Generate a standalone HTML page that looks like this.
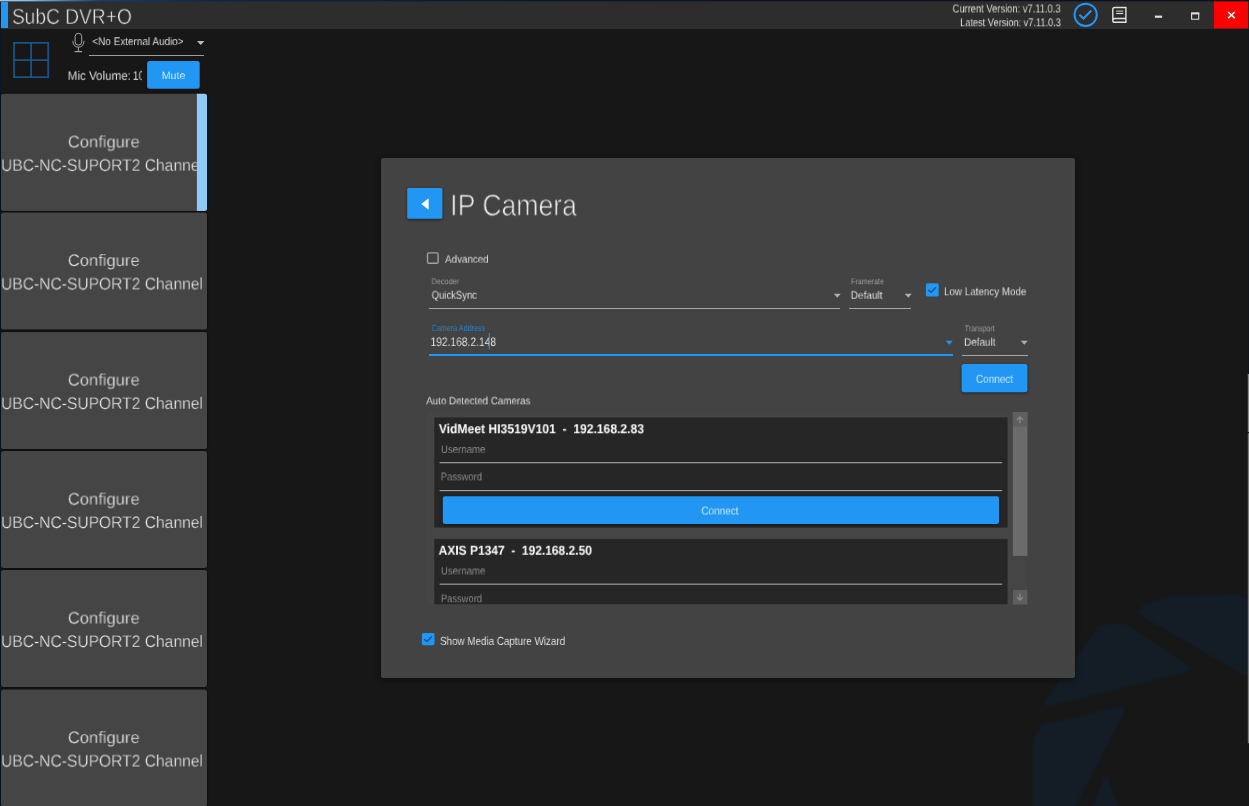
<!DOCTYPE html>
<html><head><meta charset="utf-8"><title>SubC DVR+O</title>
<style>
html,body{margin:0;padding:0}
html,body{width:1249px;height:806px;overflow:hidden;background:#171717}
#r{width:1249px;height:806px;overflow:hidden;position:relative;font-family:"Liberation Sans",sans-serif}
#r>div,#r>span,#r>svg{position:absolute;box-sizing:content-box}
.t{white-space:pre;transform-origin:0 0;display:block;will-change:transform;text-rendering:geometricPrecision}
</style></head><body><div id="r">
<div style="left:0px;top:0px;width:1249px;height:29px;background:#2d2d2d;"></div>
<div style="left:0px;top:0px;width:1249px;height:1px;background:linear-gradient(90deg,#9ccbf0 0,#86b9e4 2.4%,#143c6e 8%,#0b2242 20%,#0a1628 50%,#0b0f1a 100%);"></div>
<div style="left:0px;top:1px;width:1249px;height:1px;background:linear-gradient(90deg,#9ccbf0 0,#86b9e4 2.4%,#143c6e 8%,#0b2242 20%,#0a1628 50%,#0b0f1a 100%);opacity:.35;"></div>
<div style="left:0px;top:2px;width:8px;height:26px;background:#2196f3;"></div>
<span class="t" style="left:11px;top:6px;font-size:21.51px;line-height:21.51px;color:#f2f2f2;transform:translate(0.96px,0.80px) scaleX(0.8911);-webkit-text-stroke:0.54px #2d2d2d;">SubC DVR+O</span>
<span class="t" style="left:952px;top:3px;font-size:11.63px;line-height:11.63px;color:#f2f2f2;transform:translate(0.62px,0.50px) scaleX(0.8044);-webkit-text-stroke:0.12px #2d2d2d;">Current Version: v7.11.0.3</span>
<span class="t" style="left:960px;top:18px;font-size:11.19px;line-height:11.19px;color:#f2f2f2;transform:translate(0.18px,0.20px) scaleX(0.8232);-webkit-text-stroke:0.11px #2d2d2d;">Latest Version: v7.11.0.3</span>
<svg style="left:1070px;top:0px" width="32" height="30" viewBox="1070 0 32 30"><circle cx="1085.65" cy="14.8" r="11.15" fill="none" stroke="#2196f3" stroke-width="2"/><path d="M1079.4 14.7 L1083.5 18.5 L1091.3 10.5" fill="none" stroke="#2196f3" stroke-width="2"/></svg>
<svg style="left:1108px;top:2px" width="24" height="26" viewBox="1108 2 24 26"><path d="M1112.8 20.4 V9.4 Q1112.8 7.5 1114.7 7.5 H1125.9 V22.3 H1114.8 Q1112.8 22.3 1112.8 20.4 Q1112.8 18.5 1114.8 18.5 H1125.9" fill="none" stroke="#e2e2e2" stroke-width="1.4"/><path d="M1116.2 11.2 H1123.2" stroke="#a8a8a8" stroke-width="1.4"/><path d="M1116.2 13.5 H1123.2" stroke="#e2e2e2" stroke-width="1.1"/></svg>
<svg style="left:1153px;top:14px" width="11" height="5" viewBox="1153 14 11 5"><rect x="1154.9" y="15.6" width="7.2" height="2.2" rx="0" fill="#e0e0e0"/></svg>
<svg style="left:1189px;top:10px" width="12" height="12" viewBox="0 0 12 12"><path d="M2.6 3.4 H9.7 V9.3 H2.6 Z" fill="none" stroke="#e0e0e0" stroke-width="1.1"/><path d="M2.05 3.4 H10.25" stroke="#e0e0e0" stroke-width="2"/></svg>
<svg style="left:1213px;top:0px" width="36" height="30" viewBox="1213 0 36 30"><rect x="1214" y="1.5" width="34" height="26.9" rx="0" fill="#fe0000"/></svg>
<svg style="left:1224px;top:8px" width="16" height="14" viewBox="1224 8 16 14"><path d="M1228.2 12 L1234.7 18.2 M1234.7 12 L1228.2 18.2" stroke="#fff" stroke-width="1.6"/></svg>
<div style="left:0px;top:2px;width:1px;height:804px;background:#0b1727;"></div>
<svg style="left:11px;top:40px" width="40" height="40" viewBox="11 40 40 40"><path d="M14 42.9 H48.2 V77.2 H14 Z M31.1 42.9 V77.2 M14 60 H48.2" fill="none" stroke="#1a5487" stroke-width="1.75"/></svg>
<svg style="left:68px;top:31px" width="20" height="24" viewBox="68 31 20 24"><rect x="75.1" y="33.3" width="6.6" height="11.8" rx="3.3" fill="none" stroke="#a6a6a6" stroke-width="1"/><path d="M72.9 40.8 V41.7 A5.5 5.5 0 0 0 83.9 41.7 V40.8 M78.4 47.2 V51.4" fill="none" stroke="#a6a6a6" stroke-width="1"/><path d="M74.6 51.6 H82.1" stroke="#a6a6a6" stroke-width="1.2"/></svg>
<span class="t" style="left:92px;top:37px;font-size:11.19px;line-height:11.19px;color:#f2f2f2;transform:translate(0.38px,0.10px) scaleX(0.8884);-webkit-text-stroke:0.11px #171717;">&lt;No External Audio&gt;</span>
<svg style="left:196px;top:40px" width="10" height="6" viewBox="0 0 10 6"><path d="M1 1 H8.4 L4.7 5 Z" fill="#bdbdbd"/></svg>
<div style="left:89px;top:55px;width:115px;height:1px;background:#9c9c9c;"></div>
<span class="t" style="left:67px;top:69px;font-size:12.5px;line-height:12.5px;color:#f2f2f2;transform:translate(0.67px,0.80px) scaleX(0.9288);-webkit-text-stroke:0.12px #171717;">Mic Volume:</span>
<span class="t" style="left:132px;top:69px;font-size:12.5px;line-height:12.5px;color:#f2f2f2;transform:translate(0.76px,0.80px) scaleX(0.8401);-webkit-text-stroke:0.12px #171717;">10</span>
<div style="left:142px;top:64px;width:5px;height:20px;background:#171717;"></div>
<svg style="left:143px;top:56px;filter:drop-shadow(0 1.2px 1.6px rgba(0,0,0,.5))" width="62" height="39" viewBox="143 56 62 39"><rect x="147.1" y="60.9" width="52.6" height="27.8" rx="2.5" fill="#2196f3"/></svg>
<span class="t" style="left:161px;top:70px;font-size:10.61px;line-height:10.61px;color:#eaf4fd;transform:translate(0.71px,0.82px) scaleX(1.0038);-webkit-text-stroke:0.11px #2196f3;">Mute</span>
<svg style="left:-3px;top:89px;filter:drop-shadow(0 .5px 1.2px rgba(0,0,0,.8))" width="215" height="128" viewBox="-3 89 215 128"><rect x="1" y="93.8" width="206" height="117.1" rx="2.5" fill="#454545"/></svg>
<span class="t" style="left:67px;top:134px;font-size:16.72px;line-height:16.72px;color:#f0f0f0;transform:translate(0.82px,0.40px) scaleX(0.9916);-webkit-text-stroke:0.33px #454545;">Configure</span>
<span class="t" style="left:1px;top:157px;font-size:16.72px;line-height:16.72px;color:#f0f0f0;transform:translate(0.02px,0.80px) scaleX(0.9348);-webkit-text-stroke:0.33px #454545;">UBC-NC-SUPORT2 Channel</span>
<svg style="left:195px;top:92px" width="14" height="121" viewBox="195 92 14 121"><path d="M196.9 93.8 H204.5 Q207 93.8 207 96.3 V208.39999999999998 Q207 210.89999999999998 204.5 210.89999999999998 H196.9 Z" fill="#90caf9"/></svg>
<svg style="left:-3px;top:208px;filter:drop-shadow(0 .5px 1.2px rgba(0,0,0,.8))" width="215" height="128" viewBox="-3 208 215 128"><rect x="1" y="212.4" width="206" height="117.1" rx="2.5" fill="#454545"/></svg>
<span class="t" style="left:67px;top:253px;font-size:16.72px;line-height:16.72px;color:#f0f0f0;transform:translate(0.82px,0.00px) scaleX(0.9916);-webkit-text-stroke:0.33px #454545;">Configure</span>
<span class="t" style="left:1px;top:276px;font-size:16.72px;line-height:16.72px;color:#f0f0f0;transform:translate(0.02px,0.40px) scaleX(0.9348);-webkit-text-stroke:0.33px #454545;">UBC-NC-SUPORT2 Channel</span>
<svg style="left:-3px;top:327px;filter:drop-shadow(0 .5px 1.2px rgba(0,0,0,.8))" width="215" height="128" viewBox="-3 327 215 128"><rect x="1" y="331.9" width="206" height="117.1" rx="2.5" fill="#454545"/></svg>
<span class="t" style="left:67px;top:372px;font-size:16.72px;line-height:16.72px;color:#f0f0f0;transform:translate(0.82px,0.50px) scaleX(0.9916);-webkit-text-stroke:0.33px #454545;">Configure</span>
<span class="t" style="left:1px;top:395px;font-size:16.72px;line-height:16.72px;color:#f0f0f0;transform:translate(0.02px,0.90px) scaleX(0.9348);-webkit-text-stroke:0.33px #454545;">UBC-NC-SUPORT2 Channel</span>
<svg style="left:-3px;top:447px;filter:drop-shadow(0 .5px 1.2px rgba(0,0,0,.8))" width="215" height="128" viewBox="-3 447 215 128"><rect x="1" y="451" width="206" height="117.1" rx="2.5" fill="#454545"/></svg>
<span class="t" style="left:67px;top:491px;font-size:16.72px;line-height:16.72px;color:#f0f0f0;transform:translate(0.82px,0.60px) scaleX(0.9916);-webkit-text-stroke:0.33px #454545;">Configure</span>
<span class="t" style="left:1px;top:515px;font-size:16.72px;line-height:16.72px;color:#f0f0f0;transform:translate(0.02px,0.00px) scaleX(0.9348);-webkit-text-stroke:0.33px #454545;">UBC-NC-SUPORT2 Channel</span>
<svg style="left:-3px;top:566px;filter:drop-shadow(0 .5px 1.2px rgba(0,0,0,.8))" width="215" height="128" viewBox="-3 566 215 128"><rect x="1" y="570" width="206" height="117.1" rx="2.5" fill="#454545"/></svg>
<span class="t" style="left:67px;top:610px;font-size:16.72px;line-height:16.72px;color:#f0f0f0;transform:translate(0.82px,0.60px) scaleX(0.9916);-webkit-text-stroke:0.33px #454545;">Configure</span>
<span class="t" style="left:1px;top:634px;font-size:16.72px;line-height:16.72px;color:#f0f0f0;transform:translate(0.02px,0.00px) scaleX(0.9348);-webkit-text-stroke:0.33px #454545;">UBC-NC-SUPORT2 Channel</span>
<svg style="left:-3px;top:685px;filter:drop-shadow(0 .5px 1.2px rgba(0,0,0,.8))" width="215" height="128" viewBox="-3 685 215 128"><rect x="1" y="689.5" width="206" height="117.1" rx="2.5" fill="#454545"/></svg>
<span class="t" style="left:67px;top:730px;font-size:16.72px;line-height:16.72px;color:#f0f0f0;transform:translate(0.82px,0.10px) scaleX(0.9916);-webkit-text-stroke:0.33px #454545;">Configure</span>
<span class="t" style="left:1px;top:753px;font-size:16.72px;line-height:16.72px;color:#f0f0f0;transform:translate(0.02px,0.50px) scaleX(0.9348);-webkit-text-stroke:0.33px #454545;">UBC-NC-SUPORT2 Channel</span>
<svg style="left:1020px;top:580px" width="229" height="226" viewBox="1020 580 229 226"><g fill="#141c25" stroke="#141c25" stroke-width="5" stroke-linejoin="round" style="filter:blur(0.8px)"><path d="M1139.5 612.5 L1145 606.5 L1173 598 L1236 596.5 L1245 601 L1247 606 L1252 606 L1252 676.5 L1247 674 Z"/><path d="M1100 627.5 L1103.5 626 L1124 625.5 L1188 667 L1186 670 L1048 704.5 L1046.5 702.5 Z"/><path d="M1043 727 L1121.5 708.5 L1123 710 L1071 810 L1035.5 810 L1035.5 738 Z"/><path d="M1106.2 780 L1092.5 810 L1117.5 810 Z"/></g></svg>
<svg style="left:1246px;top:373px" width="5" height="60" viewBox="1246 373 5 60"><rect x="1247.8" y="374" width="1.3" height="58" rx="0" fill="#8a8a8a"/></svg>
<svg style="left:1246px;top:432px" width="5" height="313" viewBox="1246 432 5 313"><rect x="1247.8" y="433.2" width="1.3" height="310" rx="0" fill="#7c7c7c"/></svg>
<div style="left:1248px;top:30px;width:1px;height:344px;background:#10161f;"></div>
<div style="left:381px;top:158px;width:694px;height:520px;background:#434343;border-radius:2px;box-shadow:0 2px 6px rgba(0,0,0,.45);"></div>
<svg style="left:403px;top:184px;filter:drop-shadow(0 1.2px 1.6px rgba(0,0,0,.5))" width="45" height="41" viewBox="403 184 45 41"><rect x="407.2" y="188" width="35.2" height="30.8" rx="1.5" fill="#2196f3"/></svg>
<svg style="left:419px;top:196px" width="12" height="16" viewBox="0 0 12 16"><path d="M9.6 2.3 V13.7 L2.3 8 Z" fill="#fff"/></svg>
<span class="t" style="left:450px;top:191px;font-size:30.23px;line-height:30.23px;color:#f6f6f6;transform:translate(0.16px,0.50px) scaleX(0.8808);-webkit-text-stroke:0.79px #434343;">IP Camera</span>
<svg style="left:425px;top:250px" width="16" height="16" viewBox="0 0 16 16"><rect x="2.5" y="2.9" width="10.6" height="10.4" rx="1.3" fill="none" stroke="#a2a2a2" stroke-width="1.35"/></svg>
<span class="t" style="left:445px;top:254px;font-size:10.76px;line-height:10.76px;color:#f2f2f2;transform:translate(0.00px,0.70px) scaleX(0.9149);-webkit-text-stroke:0.11px #434343;">Advanced</span>
<span class="t" style="left:431px;top:277px;font-size:8.43px;line-height:8.43px;color:#a8a8a8;transform:translate(0.54px,0.21px) scaleX(0.8660);-webkit-text-stroke:0.08px #434343;">Decoder</span>
<span class="t" style="left:431px;top:290px;font-size:11.19px;line-height:11.19px;color:#f2f2f2;transform:translate(0.67px,0.70px) scaleX(0.8471);-webkit-text-stroke:0.11px #434343;">QuickSync</span>
<div style="left:429px;top:308px;width:411px;height:1.1px;background:#a6a6a6;"></div>
<svg style="left:833px;top:293.3px" width="9" height="6" viewBox="0 0 9 6"><path d="M0.8 0.8 H7.8 L4.3 4.8 Z" fill="#adadad"/></svg>
<span class="t" style="left:851px;top:277px;font-size:8.43px;line-height:8.43px;color:#a8a8a8;transform:translate(0.05px,0.21px) scaleX(0.8468);-webkit-text-stroke:0.08px #434343;">Framerate</span>
<span class="t" style="left:850px;top:290px;font-size:10.9px;line-height:10.9px;color:#f2f2f2;transform:translate(0.76px,0.80px) scaleX(0.9199);-webkit-text-stroke:0.11px #434343;">Default</span>
<svg style="left:903.6px;top:293.3px" width="9" height="6" viewBox="0 0 9 6"><path d="M0.8 0.8 H7.8 L4.3 4.8 Z" fill="#adadad"/></svg>
<div style="left:849px;top:308px;width:62px;height:1.1px;background:#a6a6a6;"></div>
<svg style="left:924px;top:282px" width="16" height="16" viewBox="924 282 16 16"><rect x="925.9" y="283.3" width="12.8" height="13.1" rx="1.6" fill="#2196f3"/><path d="M928.20 290.11 L931.02 292.47 L936.01 287.10" fill="none" stroke="#1d4c80" stroke-width="1.3"/></svg>
<span class="t" style="left:944px;top:287px;font-size:11.34px;line-height:11.34px;color:#f2f2f2;transform:translate(0.03px,0.30px) scaleX(0.8658);-webkit-text-stroke:0.11px #434343;">Low Latency Mode</span>
<span class="t" style="left:431px;top:323px;font-size:8.87px;line-height:8.87px;color:#2a8ade;transform:translate(0.57px,0.90px) scaleX(0.8112);-webkit-text-stroke:0.09px #434343;">Camera Address</span>
<span class="t" style="left:430px;top:335px;font-size:12.21px;line-height:12.21px;color:#f2f2f2;transform:translate(0.56px,0.90px) scaleX(0.8389);-webkit-text-stroke:0.12px #434343;">192.168.2.148</span>
<svg style="left:487px;top:332px" width="4" height="19" viewBox="487 332 4 19"><rect x="488.8" y="333" width="1.2" height="16.4" rx="0" fill="#3585cc"/></svg>
<div style="left:429px;top:353.5px;width:524px;height:2.3px;background:#2196f3;"></div>
<svg style="left:945.3px;top:339.7px" width="9" height="6" viewBox="0 0 9 6"><path d="M0.8 0.8 H7.8 L4.3 4.8 Z" fill="#2196f3"/></svg>
<span class="t" style="left:964px;top:324px;font-size:8.72px;line-height:8.72px;color:#a8a8a8;transform:translate(0.75px,0.30px) scaleX(0.8111);-webkit-text-stroke:0.09px #434343;">Transport</span>
<span class="t" style="left:964px;top:337px;font-size:11.05px;line-height:11.05px;color:#f2f2f2;transform:translate(0.16px,0.70px) scaleX(0.8933);-webkit-text-stroke:0.11px #434343;">Default</span>
<svg style="left:1020.2px;top:339.8px" width="9" height="6" viewBox="0 0 9 6"><path d="M0.8 0.8 H7.8 L4.3 4.8 Z" fill="#adadad"/></svg>
<div style="left:962px;top:355px;width:65.5px;height:1.1px;background:#a6a6a6;"></div>
<svg style="left:957px;top:360px;filter:drop-shadow(0 1.2px 1.6px rgba(0,0,0,.5))" width="76" height="39" viewBox="957 360 76 39"><rect x="961.6" y="364.1" width="65.8" height="28.1" rx="2.5" fill="#2196f3"/></svg>
<span class="t" style="left:975px;top:374px;font-size:11.48px;line-height:11.48px;color:#eaf4fd;transform:translate(0.91px,0.80px) scaleX(0.8697);-webkit-text-stroke:0.11px #2196f3;">Connect</span>
<span class="t" style="left:426px;top:396px;font-size:10.61px;line-height:10.61px;color:#f2f2f2;transform:translate(0.20px,0.32px) scaleX(0.9204);-webkit-text-stroke:0.11px #434343;">Auto Detected Cameras</span>
<div style="left:427px;top:412px;width:585.8px;height:192.3px;background:#454545;"></div>
<svg style="left:433px;top:416px" width="576" height="113" viewBox="433 416 576 113"><rect x="434.3" y="417.4" width="573.3" height="110.2" rx="0" fill="#262626"/></svg>
<span class="t" style="left:438px;top:422px;font-size:13.08px;line-height:13.08px;color:#fcfcfc;transform:translate(0.85px,0.20px) scaleX(0.9260);font-weight:bold;">VidMeet HI3519V101  -  192.168.2.83</span>
<span class="t" style="left:440px;top:445px;font-size:11.05px;line-height:11.05px;color:#9a9a9a;transform:translate(0.94px,0.00px) scaleX(0.8730);-webkit-text-stroke:0.11px #262626;">Username</span>
<svg style="left:438px;top:461px" width="566" height="4" viewBox="438 461 566 4"><rect x="439.6" y="462.09999999999997" width="562.6" height="1.15" rx="0" fill="#a2a2a2"/></svg>
<span class="t" style="left:440px;top:472px;font-size:11.19px;line-height:11.19px;color:#9a9a9a;transform:translate(0.76px,0.40px) scaleX(0.8371);-webkit-text-stroke:0.11px #262626;">Password</span>
<svg style="left:438px;top:489px" width="566" height="4" viewBox="438 489 566 4"><rect x="439.6" y="490.0" width="562.6" height="1.15" rx="0" fill="#a2a2a2"/></svg>
<svg style="left:438px;top:492px;filter:drop-shadow(0 1.2px 1.6px rgba(0,0,0,.5))" width="566" height="39" viewBox="438 492 566 39"><rect x="442.8" y="496.2" width="556.2" height="27.9" rx="2" fill="#2196f3"/></svg>
<span class="t" style="left:701px;top:506px;font-size:11.48px;line-height:11.48px;color:#eaf4fd;transform:translate(0.41px,0.60px) scaleX(0.8674);-webkit-text-stroke:0.11px #2196f3;">Connect</span>
<svg style="left:433px;top:537px" width="576" height="69" viewBox="433 537 576 69"><rect x="434.3" y="538.9" width="573.3" height="65.30000000000007" rx="0" fill="#262626"/></svg>
<span class="t" style="left:438px;top:543px;font-size:13.08px;line-height:13.08px;color:#fcfcfc;transform:translate(0.61px,0.70px) scaleX(0.9165);font-weight:bold;">AXIS P1347  -  192.168.2.50</span>
<span class="t" style="left:440px;top:566px;font-size:11.05px;line-height:11.05px;color:#9a9a9a;transform:translate(0.94px,0.50px) scaleX(0.8730);-webkit-text-stroke:0.11px #262626;">Username</span>
<svg style="left:438px;top:582px" width="566" height="4" viewBox="438 582 566 4"><rect x="439.6" y="583.6" width="562.6" height="1.15" rx="0" fill="#a2a2a2"/></svg>
<span class="t" style="left:440px;top:594px;font-size:11.05px;line-height:11.05px;color:#9a9a9a;transform:translate(0.90px,0.20px) scaleX(0.8480);-webkit-text-stroke:0.11px #262626;clip-path:inset(-5px -5px 1.2px -5px);">Password</span>
<svg style="left:1011px;top:411px" width="18" height="195" viewBox="1011 411 18 195"><rect x="1012.9" y="412.1" width="14.5" height="192.2" rx="0" fill="#454545"/></svg>
<svg style="left:1011px;top:411px" width="18" height="146" viewBox="1011 411 18 146"><rect x="1012.9" y="412.1" width="14.5" height="143.8" rx="0" fill="#6b6b6b"/></svg>
<svg style="left:1011px;top:411px" width="18" height="17" viewBox="1011 411 18 17"><rect x="1012.9" y="412.1" width="14.5" height="14.6" rx="0" fill="#5f5f5f"/></svg>
<svg style="left:1011px;top:588px" width="18" height="18" viewBox="1011 588 18 18"><rect x="1012.9" y="589.9" width="14.5" height="14.6" rx="0" fill="#5e5e5e"/></svg>
<svg style="left:1012px;top:412px" width="16" height="16" viewBox="1012 412 16 16"><path d="M1019.9 423.2 V417.2 M1016.9 420 L1019.9 416.9 L1022.9 420" fill="none" stroke="#8a8a8a" stroke-width="1.25"/></svg>
<svg style="left:1012px;top:589px" width="16" height="16" viewBox="1012 589 16 16"><path d="M1019.9 593.6 V599.8 M1016.9 597 L1019.9 600.1 L1022.9 597" fill="none" stroke="#8a8a8a" stroke-width="1.25"/></svg>
<svg style="left:420px;top:631px" width="16" height="16" viewBox="420 631 16 16"><rect x="421.9" y="632.9" width="12.6" height="12.3" rx="1.6" fill="#2196f3"/><path d="M424.17 639.30 L426.94 641.51 L431.85 636.47" fill="none" stroke="#1d4c80" stroke-width="1.3"/></svg>
<span class="t" style="left:439px;top:636px;font-size:11.77px;line-height:11.77px;color:#f2f2f2;transform:translate(0.97px,0.00px) scaleX(0.8358);-webkit-text-stroke:0.12px #434343;">Show Media Capture Wizard</span>
</div></body></html>
